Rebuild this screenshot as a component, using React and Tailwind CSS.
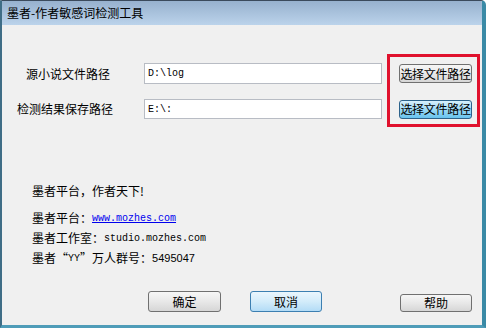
import React from 'react';

const cjk = { fontFamily: '"Noto Sans CJK SC", "Noto Sans", sans-serif' };
const mono = { fontFamily: '"Liberation Mono", "Noto Sans CJK SC", monospace' };

function WinButton({ children, variant = 'normal', className = '' }) {
  const skins = {
    normal: 'border-[#707070] bg-gradient-to-b from-[#f6f6f6] via-[#e8e8e8] to-[#d6d6d6]',
    hover: 'border-[#3c7fb1] bg-gradient-to-b from-[#eaf6fd] via-[#d3ecfa] to-[#b3dcf6]',
    focus: 'border-[#2c628b] bg-gradient-to-b from-[#d8f1fd] via-[#9bd9f7] to-[#68c3ee]',
  };
  return (
    <button
      className={`flex items-center justify-center overflow-hidden whitespace-nowrap rounded-[3px] border text-[12px] text-black leading-none ${skins[variant]} ${className}`}
      style={cjk}
    >
      {children}
    </button>
  );
}

function PathRow({ label, value, labelPad, variant, className = '' }) {
  return (
    <div className={`flex items-center ${className}`}>
      <div className={`w-[142px] text-[12px] text-black ${labelPad}`} style={cjk}>
        {label}
      </div>
      <div className="flex h-full w-[238px] items-center border border-[#b8bcc4] bg-white pl-[3px] text-[10px] text-black" style={mono}>
        {value}
      </div>
      <WinButton variant={variant} className="ml-[17px] h-[19px] w-[73px] tracking-[-0.3px]">
        选择文件路径
      </WinButton>
    </div>
  );
}

export default function App() {
  return (
    <div className="relative flex h-[328px] w-[486px] flex-col overflow-hidden rounded-tr-[5px] border-l-2 border-r-[4px] border-b-[3px] border-t border-l-[#3f6d86] border-r-[#3a8aa6] border-b-[#4f9cb8] border-t-[#3b4a5c] bg-[#f0f0f0]">
      <div className="flex h-[24px] shrink-0 items-center bg-gradient-to-b from-[#97b1ce] to-[#bbd3eb] pl-[5px] text-[12px] text-black" style={cjk}>
        墨者-作者敏感词检测工具
      </div>

      <PathRow label="源小说文件路径" value="D:\log" labelPad="pl-[24px]" variant="normal" className="mt-[38px] h-[21px]" />
      <PathRow label="检测结果保存路径" value="E:\:" labelPad="pl-[15px]" variant="focus" className="mt-[15px] h-[20px]" />

      <div className="mt-[62px] flex flex-col pl-[30px] text-[12px] text-black" style={cjk}>
        <div className="flex h-[20px] items-center">墨者平台，作者天下!</div>
        <div className="mt-[7px] flex h-[20px] items-center">
          墨者平台：
          <span className="text-[10px] text-[#0000ee] underline" style={mono}>www.mozhes.com</span>
        </div>
        <div className="flex h-[20px] items-center">
          墨者工作室：
          <span className="text-[10px]" style={mono}>studio.mozhes.com</span>
        </div>
        <div className="flex h-[20px] items-center">
          墨者“<span className="text-[10px]" style={mono}>YY</span>”万人群号：
          <span className="text-[11px]" style={{ fontFamily: '"Liberation Sans", sans-serif' }}>5495047</span>
        </div>
      </div>

      <div className="mt-[23px] flex items-end pl-[146px]">
        <WinButton className="h-[21px] w-[73px]">确定</WinButton>
        <WinButton variant="hover" className="ml-[29px] h-[21px] w-[72px]">取消</WinButton>
        <WinButton className="ml-[78px] h-[18px] w-[72px]">帮助</WinButton>
      </div>

      <div className="pointer-events-none absolute left-[385px] top-[53px] h-[73px] w-[93px] border-[3px] border-[#e0112d]" />
    </div>
  );
}
